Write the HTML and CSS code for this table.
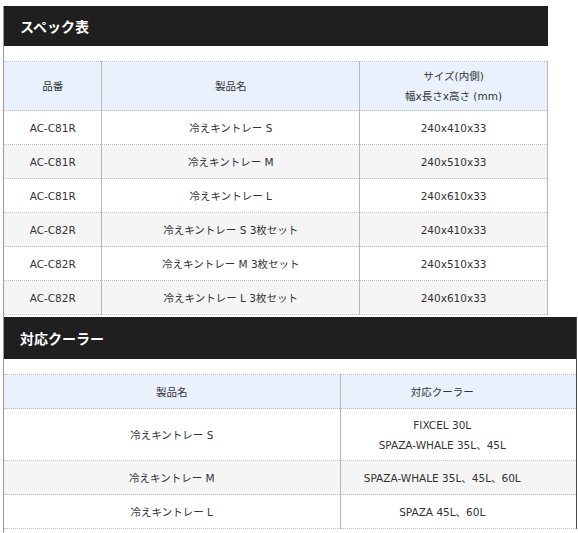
FILE: index.html
```html
<!DOCTYPE html>
<html lang="ja">
<head>
<meta charset="utf-8">
<title>スペック表</title>
<link rel="stylesheet" href="styles.css">
</head>
<body>
<div class="page">
  <section class="spec">
    <h2 class="bar">スペック表</h2>
    <table class="t1">
      <colgroup><col class="c1"><col class="c2"><col class="c3"></colgroup>
      <tr class="head"><th>品番</th><th>製品名</th><th>サイズ(内側)<br>幅x長さx高さ (mm)</th></tr>
      <tr><td>AC-C81R</td><td>冷えキントレー S</td><td>240x410x33</td></tr>
      <tr class="alt"><td>AC-C81R</td><td>冷えキントレー M</td><td>240x510x33</td></tr>
      <tr><td>AC-C81R</td><td>冷えキントレー L</td><td>240x610x33</td></tr>
      <tr class="alt"><td>AC-C82R</td><td>冷えキントレー S 3枚セット</td><td>240x410x33</td></tr>
      <tr><td>AC-C82R</td><td>冷えキントレー M 3枚セット</td><td>240x510x33</td></tr>
      <tr class="alt"><td>AC-C82R</td><td>冷えキントレー L 3枚セット</td><td>240x610x33</td></tr>
    </table>
  </section>
  <section class="cooler">
    <h2 class="bar bar-tall">対応クーラー</h2>
    <table class="t2">
      <colgroup><col class="d1"><col class="d2"></colgroup>
      <tr class="head2"><th>製品名</th><th class="shift">対応クーラー</th></tr>
      <tr class="double"><td>冷えキントレー S</td><td class="shift">FIXCEL 30L<br>SPAZA-WHALE 35L、45L</td></tr>
      <tr class="alt"><td>冷えキントレー M</td><td class="shift">SPAZA-WHALE 35L、45L、60L</td></tr>
      <tr><td>冷えキントレー L</td><td class="shift">SPAZA 45L、60L</td></tr>
    </table>
  </section>
</div>
</body>
</html>
```
FILE: styles.css
```css
html, body {
  margin: 0;
  padding: 0;
  background: #fff;
}
body {
  font-family: "DejaVu Sans", "Noto Sans CJK JP", sans-serif;
  font-size: 10.5px;
  color: #333;
}
.page {
  margin: 6px 0 0 3px;
  border-left: 1px solid #9a9a9a;
  min-height: 527px;
}
.spec {
  width: 544px;
}
.bar {
  margin: 0;
  height: 40px;
  line-height: 40px;
  padding-left: 16px;
  background: #1f1f1f;
  color: #fff;
  font-family: "Noto Sans CJK JP", sans-serif;
  font-weight: bold;
  font-size: 14px;
}
.bar-tall {
  height: 42px;
  line-height: 42px;
}
table {
  border-collapse: collapse;
  margin-top: 15px;
  border-top: 1px dotted #bdbdbd;
}
th, td {
  font-weight: normal;
  text-align: center;
  vertical-align: middle;
  line-height: 20px;
  padding: 0 4px;
  border-bottom: 1px dotted #bdbdbd;
  border-left: 1px solid #b8b8b8;
  height: 33px;
}
th:first-child, td:first-child {
  border-left: none;
}
.t1 {
  width: 544px;
  border-right: 1px solid #b8b8b8;
}
.c1 { width: 98px; }
.c2 { width: 258px; }
.c3 { width: 188px; }
.head th {
  background: #e8f1fc;
  height: 48px;
}
.alt td {
  background: #f5f5f5;
}
.cooler {
  margin-top: 2px;
  width: 572px;
  border-right: 1px solid #4a4a4a;
}
.t2 {
  width: 572px;
}
.d1 { width: 336px; }
.d2 { width: 236px; }
.head2 th {
  background: #e8f1fc;
  height: 33px;
}
.double td {
  height: 51px;
}
.shift {
  padding-right: 36px;
}
```
